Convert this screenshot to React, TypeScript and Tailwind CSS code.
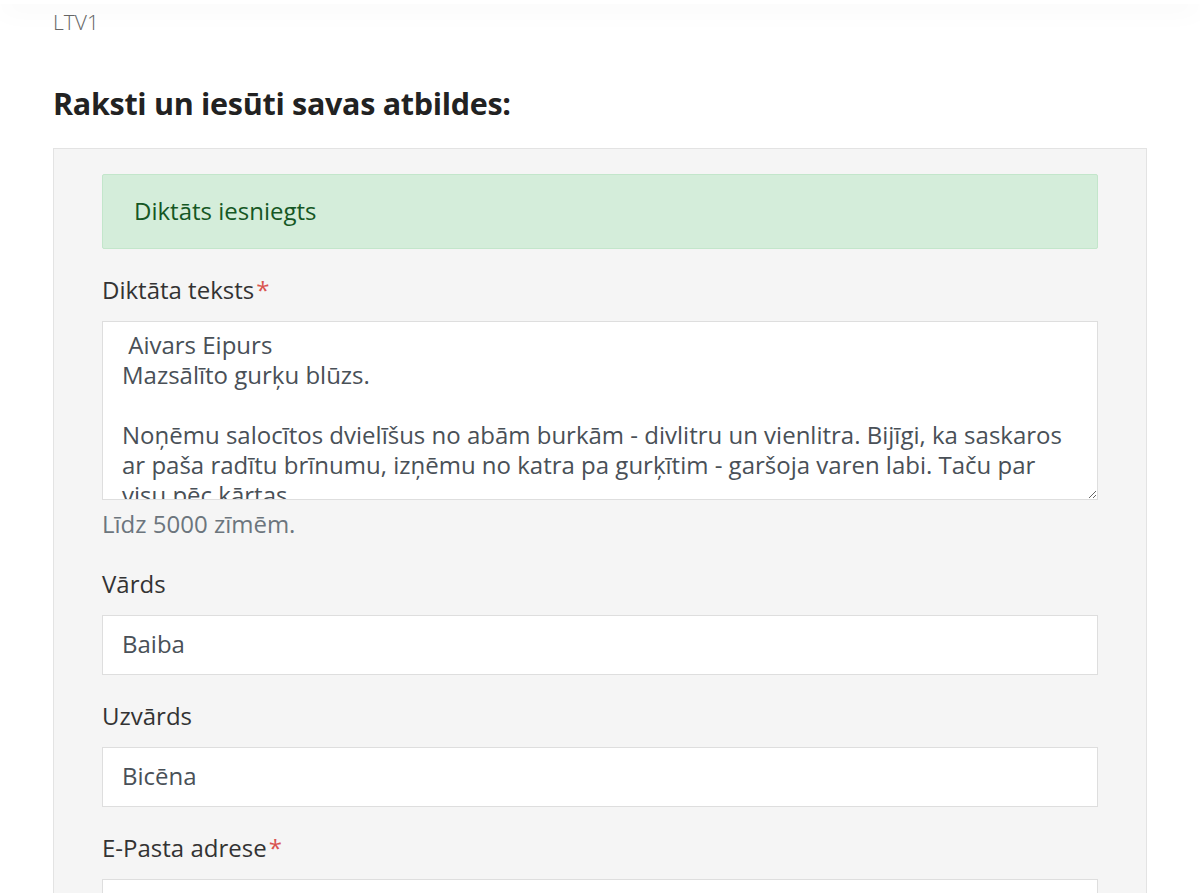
import React from 'react'

const dictation = ` Aivars Eipurs
Mazsālīto gurķu blūzs.

Noņēmu salocītos dvielīšus no abām burkām - divlitru un vienlitra. Bijīgi, ka saskaros ar paša radītu brīnumu, izņēmu no katra pa gurķītim - garšoja varen labi. Taču par visu pēc kārtas.

Gurķus pirku tirgū, mazus un stingrus, tādus, kādi der sālīšanai.`

const Label = ({ text, required }: { text: string; required?: boolean }) => (
    <label className="block text-[24px] leading-[30px] text-[#333]">
        {text}
        {required && <span className="text-[#d9534f] ml-[2px]">*</span>}
    </label>
)

const App = () => {
    return (
        <div className="min-h-screen bg-white font-['Open_Sans',sans-serif] overflow-hidden">
            <div className="relative z-10 h-[4px] bg-white shadow-[0_2px_28px_rgba(0,0,0,0.12)]"></div>
            <div className="px-[53px]">
                <p className="mt-[5px] text-[21px] leading-[27px] text-[#666] font-light">LTV1</p>

                <h2 className="mt-[49px] text-[30.5px] leading-[36px] font-bold text-[#222] tracking-[-0.3px]">
                    Raksti un iesūti savas atbildes:
                </h2>

                <div className="mt-[27px] bg-[#f5f5f5] border border-[#e3e3e3] px-[48px] pt-[25px] pb-10">
                    <div className="bg-[#d4edda] border border-[#c3e6cb] rounded-[2px] px-[31px] pt-[20px] pb-[22px] text-[24px] leading-[31px] text-[#155724]">
                        Diktāts iesniegts
                    </div>

                    <div className="mt-[26px]">
                        <Label text="Diktāta teksts" required />
                        <textarea
                            defaultValue={dictation}
                            className="mt-[16px] block w-full h-[179px] bg-white border border-[#dedede] px-[19px] pt-[8px] text-[24px] leading-[30px] text-[#495057] resize-y outline-none [scrollbar-width:none]"
                        />
                        <p className="mt-[9px] text-[24px] leading-[30px] text-[#6c757d]">Līdz 5000 zīmēm.</p>
                    </div>

                    <div className="mt-[30px]">
                        <Label text="Vārds" />
                        <input
                            defaultValue="Baiba"
                            className="mt-[16px] block w-full h-[60px] bg-white border border-[#dedede] px-[19px] pb-[4px] text-[24px] text-[#495057] outline-none"
                        />
                    </div>

                    <div className="mt-[26px]">
                        <Label text="Uzvārds" />
                        <input
                            defaultValue="Bicēna"
                            className="mt-[16px] block w-full h-[60px] bg-white border border-[#dedede] px-[19px] pb-[4px] text-[24px] text-[#495057] outline-none"
                        />
                    </div>

                    <div className="mt-[26px]">
                        <Label text="E-Pasta adrese" required />
                        <input
                            defaultValue=""
                            className="mt-[16px] block w-full h-[60px] bg-white border border-[#dedede] px-[19px] pb-[4px] text-[24px] text-[#495057] outline-none"
                        />
                    </div>
                </div>
            </div>
        </div>
    )
}

export default App
